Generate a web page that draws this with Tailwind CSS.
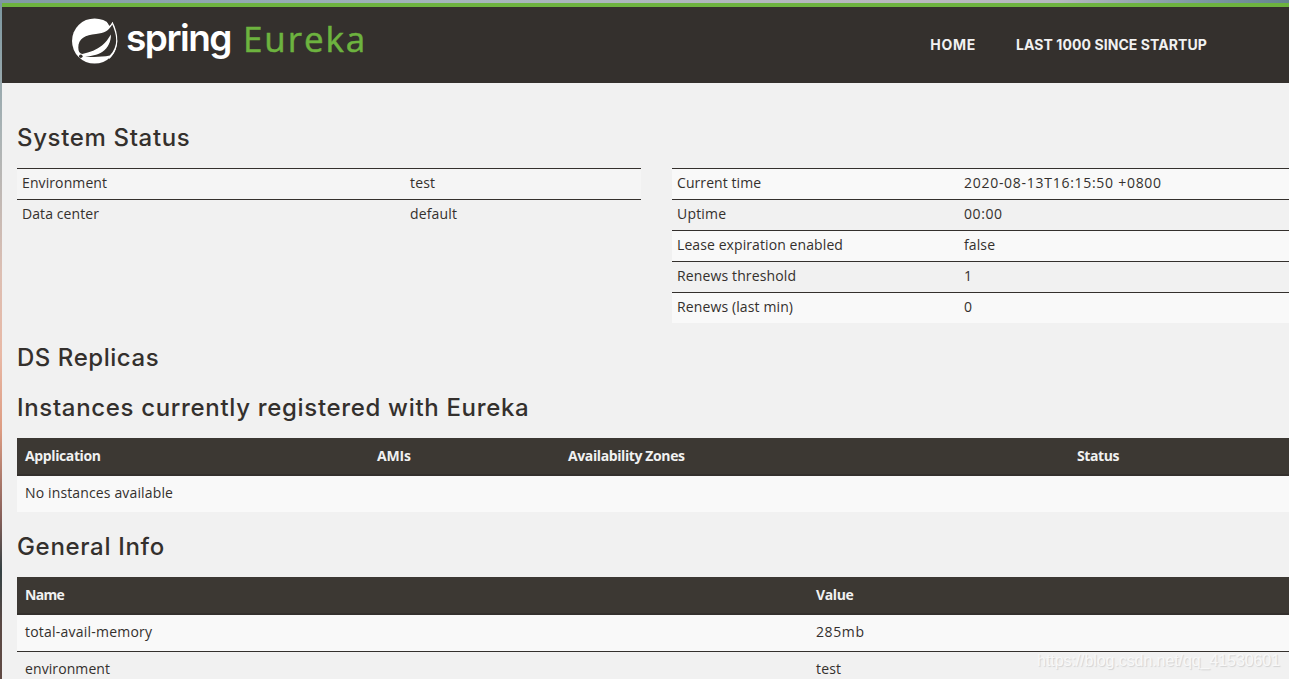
<!DOCTYPE html>
<html lang="en">
<head>
<meta charset="utf-8">
<title>Eureka</title>
<script src="https://cdn.jsdelivr.net/npm/@tailwindcss/browser@4"></script>
</head>
<body class="relative flex h-[679px] flex-col overflow-hidden bg-[#f1f1f1] font-['Open_Sans',sans-serif] text-[14px] leading-5 text-[#34302d]">
  <div class="h-[3px] shrink-0 bg-[linear-gradient(to_right,#8099a3,#93a9b3_20%,#a5b5bb_35%,#b9b8bf_70%,#b5b8be_82%,#7d98a3_93%,#66848f)]"></div>
  <div class="flex min-h-0 flex-1">
    <div class="w-[2px] shrink-0 bg-[linear-gradient(to_bottom,#7c97a0,#a9b3b5_19%,#ddbfb3_40%,#e8b8a5_52%,#dd9c82_63%,#87605a_76%,#344244_84%,#5a4843_92%,#604a44)]"></div>
    <div class="flex min-w-0 flex-1 flex-col">
      <header class="flex h-[80px] shrink-0 items-start border-t-4 border-[#6db33f] bg-[#34302d]">
        <div class="flex pt-[7px] pl-16">
          <svg class="h-14 w-[60px] shrink-0" viewBox="0 0 60 56" fill="none">
            <circle cx="28.6" cy="27" r="22.6" fill="#fff"/>
            <path d="M43 13.5L46.5 7.5C49.5 14 51.5 20 51.3 27C51 35 47 42 43 45Z" fill="#fff"/>
            <path d="M44 8L46.4 5L48.6 11L46.6 7.6L43.4 12L41 8Z" fill="#34302d"/>
            <path d="M46.3 10.6C43 16.5 38.5 19.4 30 20C19.5 21 12.2 24.5 12.3 33.5C12.4 37.5 13.4 39.6 16.2 39.9C24 38.5 31 35.6 36 31.5C40 28.3 42.2 25 44.9 20.6C45.2 27.5 42 34 36.5 37.8C31 41.5 25 42.1 19 42.7C27 43.3 36 43.2 43.8 41.6C48.2 36.8 50.3 31.5 50.2 26C50.1 20.5 48.4 15.5 46.3 10.6Z" fill="#34302d"/>
            <circle cx="14.8" cy="42.3" r="1.8" fill="#34302d"/>
          </svg>
          <span class="w-[117px] font-[Inter,sans-serif] text-[37px] leading-[48px] font-semibold tracking-[-1.5px] text-white">spring</span>
          <span class="pt-[3px] text-[35px] leading-[44px] tracking-[1.9px] text-[#6db33f] [-webkit-text-stroke:0.5px_#6db33f]">Eureka</span>
        </div>
        <nav class="mr-[82px] ml-auto flex gap-10 pt-[28px] font-[Inter,sans-serif] font-bold text-[#f1f1f1]">
          <a class="tracking-[0.75px]">HOME</a>
          <a class="tracking-[0.08px]">LAST 1000 SINCE STARTUP</a>
        </nav>
      </header>
      <main class="flex min-w-0 flex-col pl-[15px]">
        <h1 class="mt-[40px] h-[45px] font-[Inter,sans-serif] text-[24px] leading-[30px] font-medium tracking-[0.65px]">System Status</h1>
        <div class="flex gap-[31px]">
          <div class="w-[624px] shrink-0">
            <div class="flex h-[31px] border-t border-[#34302d] bg-[#f5f5f5] pt-1 pl-[5px]"><span class="w-[388px] tracking-[0.1px]">Environment</span><span class="tracking-[0.16px]">test</span></div>
            <div class="flex h-[31px] border-t border-[#34302d] pt-1 pl-[5px]"><span class="w-[388px] tracking-[0.09px]">Data center</span><span class="tracking-[0.16px]">default</span></div>
          </div>
          <div class="flex-1">
            <div class="flex h-[31px] border-t border-[#34302d] bg-[#f9f9f9] pt-1 pl-[5px]"><span class="w-[287px] tracking-[0.07px]">Current time</span><span class="tracking-[0.72px]">2020-08-13T16:15:50 +0800</span></div>
            <div class="flex h-[31px] border-t border-[#34302d] pt-1 pl-[5px]"><span class="w-[287px] tracking-[0.18px]">Uptime</span><span class="tracking-[0.58px]">00:00</span></div>
            <div class="flex h-[31px] border-t border-[#34302d] bg-[#f9f9f9] pt-1 pl-[5px]"><span class="w-[287px] tracking-[0.09px]">Lease expiration enabled</span><span class="tracking-[0.11px]">false</span></div>
            <div class="flex h-[31px] border-t border-[#34302d] pt-1 pl-[5px]"><span class="w-[287px] tracking-[0.13px]">Renews threshold</span><span>1</span></div>
            <div class="flex h-[31px] border-t border-[#34302d] bg-[#f9f9f9] pt-1 pl-[5px]"><span class="w-[287px] tracking-[0.12px]">Renews (last min)</span><span>0</span></div>
          </div>
        </div>
        <h1 class="mt-[20px] h-[50px] font-[Inter,sans-serif] text-[24px] leading-[30px] font-medium tracking-[0.55px]">DS Replicas</h1>
        <h1 class="h-[45px] font-[Inter,sans-serif] text-[24px] leading-[30px] font-medium tracking-[0.67px]">Instances currently registered with Eureka</h1>
        <div class="flex h-[38px] border-b-2 border-[#34302d] bg-[#3c3833] pt-2 pl-2 font-bold text-[#f1f1f1]">
          <span class="w-[352px] tracking-[-0.38px]">Application</span><span class="w-[191px] tracking-[-0.15px]">AMIs</span><span class="w-[509px] tracking-[-0.39px]">Availability Zones</span><span class="tracking-[-0.4px]">Status</span>
        </div>
        <div class="h-[36px] bg-[#f9f9f9] pt-[7px] pl-2 tracking-[0.14px]">No instances available</div>
        <h1 class="mt-[20px] h-[45px] font-[Inter,sans-serif] text-[24px] leading-[30px] font-medium tracking-[0.67px]">General Info</h1>
        <div class="flex h-[38px] border-b-2 border-[#34302d] bg-[#3c3833] pt-2 pl-2 font-bold text-[#f1f1f1]">
          <span class="w-[791px] tracking-[-0.7px]">Name</span><span class="tracking-[-0.4px]">Value</span>
        </div>
        <div class="flex h-[36px] bg-[#f9f9f9] pt-[7px] pl-2"><span class="w-[791px] tracking-[0.22px]">total-avail-memory</span><span class="tracking-[0.6px]">285mb</span></div>
        <div class="flex h-[37px] border-t border-[#34302d] pt-[7px] pl-2"><span class="w-[791px] tracking-[0.09px]">environment</span><span class="tracking-[0.16px]">test</span></div>
      </main>
    </div>
  </div>
  <div class="absolute right-[9px] bottom-[8px] font-['Liberation_Sans',sans-serif] text-[16px] leading-5 tracking-[-0.08px] text-[#f8f8f8] [text-shadow:1px_1px_1px_#d2d2d2]">https://blog.csdn.net/qq_41530601</div>
</body>
</html>
